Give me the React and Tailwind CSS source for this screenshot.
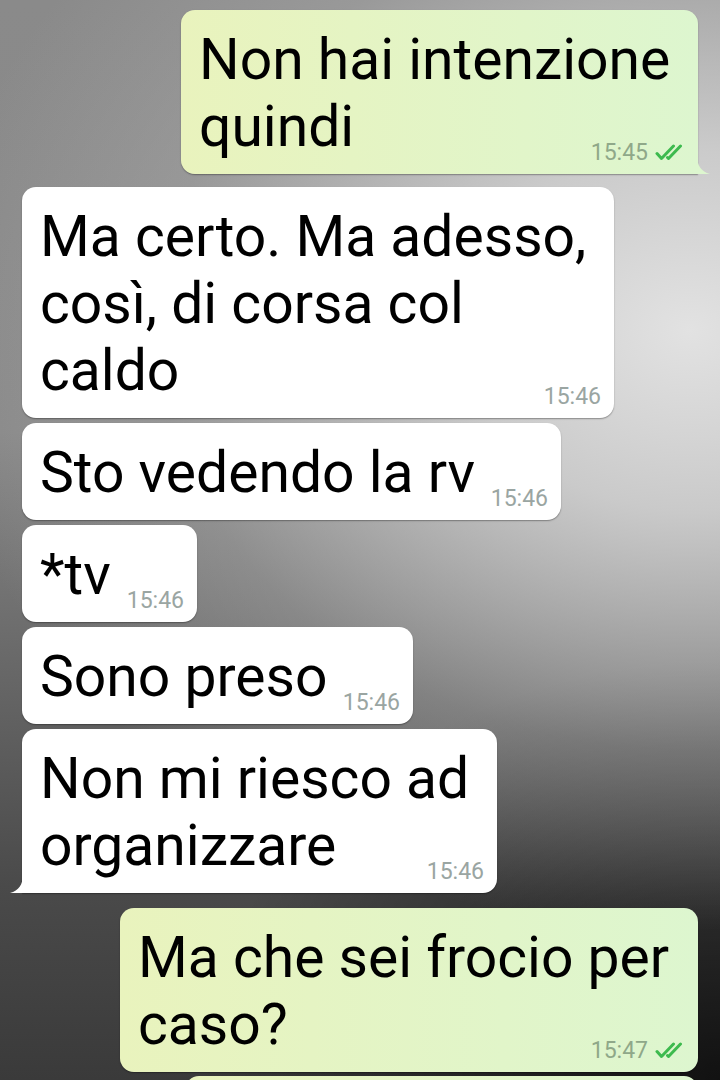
import React from "react";

const messages = [
  { out: true, lines: ["Non hai intenzione", "quindi"], time: "15:45", w: "w-[517px]", tail: true, gap: "mt-[10px]" },
  { out: false, lines: ["Ma certo. Ma adesso,", "così, di corsa col", "caldo"], time: "15:46", w: "w-[592px]", gap: "mt-[13px]" },
  { out: false, lines: ["Sto vedendo la rv"], time: "15:46", w: "w-[539px]", gap: "mt-[5px]" },
  { out: false, lines: ["*tv"], time: "15:46", w: "w-[175px]", gap: "mt-[5px]" },
  { out: false, lines: ["Sono preso"], time: "15:46", w: "w-[391px]", gap: "mt-[5px]" },
  { out: false, lines: ["Non mi riesco ad", "organizzare"], time: "15:46", w: "w-[475px]", tail: true, gap: "mt-[5px]" },
  { out: true, lines: ["Ma che sei frocio per", "caso?"], time: "15:47", w: "w-[578px]", gap: "mt-[15px]" },
];

function DoubleCheck() {
  return (
    <svg width="34" height="17" viewBox="0 0 34 17" fill="none" className="ml-[7px]">
      <path d="M2 9.5 L6.5 14.5 L18.5 2" stroke="#3dba4e" strokeWidth="3" strokeLinecap="round" strokeLinejoin="round" />
      <path d="M12.5 13.5 L13.5 14.5 L25.5 2" stroke="#3dba4e" strokeWidth="3" strokeLinecap="round" strokeLinejoin="round" />
    </svg>
  );
}

function Bubble({ m }) {
  const base = m.out
    ? "self-end mr-[22px] bg-gradient-to-r from-[#e9f3bd] to-[#ddf6cf]"
    : "self-start ml-[22px] bg-white";
  const corner = m.tail ? (m.out ? "rounded-br-none" : "rounded-bl-none") : "";

  return (
    <div className={`relative ${m.gap} ${m.w} ${base} ${corner} rounded-[14px] px-[18px] pt-[16px] pb-[14px] shadow-[0_1px_1.5px_rgba(0,0,0,0.35)]`}>
      <div className="text-[57px] leading-[67px] text-black">
        {m.lines.map((l, i) => (
          <React.Fragment key={i}>
            {i > 0 && <br />}
            {l}
          </React.Fragment>
        ))}
      </div>
      <div className={`absolute bottom-[10px] flex items-center ${m.out ? "right-[9px]" : "right-[13px]"}`}>
        <span className={`text-[23px] leading-[23px] ${m.out ? "text-[#8fa889]" : "text-[#9aa5a2]"}`}>{m.time}</span>
        {m.out && <DoubleCheck />}
      </div>
      {m.tail && m.out && (
        <svg width="13" height="18" viewBox="0 0 13 18" className="absolute bottom-0 right-[-12px]">
          <path d="M0 0 C0.5 10 4 15.5 13 18 L0 18 Z" fill="#ddf6cf" />
        </svg>
      )}
      {m.tail && !m.out && (
        <svg width="13" height="18" viewBox="0 0 13 18" className="absolute bottom-0 left-[-12px]">
          <path d="M13 0 C12.5 10 9 15.5 0 18 L13 18 Z" fill="#ffffff" />
        </svg>
      )}
    </div>
  );
}

export default function App() {
  return (
    <div className="h-[1080px] w-[720px] overflow-hidden font-['Roboto',sans-serif] bg-[radial-gradient(ellipse_760px_600px_at_690px_330px,rgba(226,226,226,1)_0%,rgba(210,210,210,0.9)_30%,rgba(175,175,175,0.4)_70%,rgba(150,150,150,0)_100%),radial-gradient(ellipse_520px_420px_at_720px_1080px,rgba(0,0,0,0.7)_0%,rgba(0,0,0,0)_100%),linear-gradient(to_bottom,#8a8a8a_0%,#888888_40%,#4a4a4a_82%,#3a3a3a_100%)]">
      <div className="flex flex-col">
        {messages.map((m, i) => (
          <Bubble key={i} m={m} />
        ))}
        <div className="self-end mr-[22px] mt-[4px] h-[60px] w-[513px] rounded-[14px] bg-gradient-to-r from-[#e9f3bd] to-[#ddf6cf] shadow-[0_1px_1.5px_rgba(0,0,0,0.35)]" />
      </div>
    </div>
  );
}
